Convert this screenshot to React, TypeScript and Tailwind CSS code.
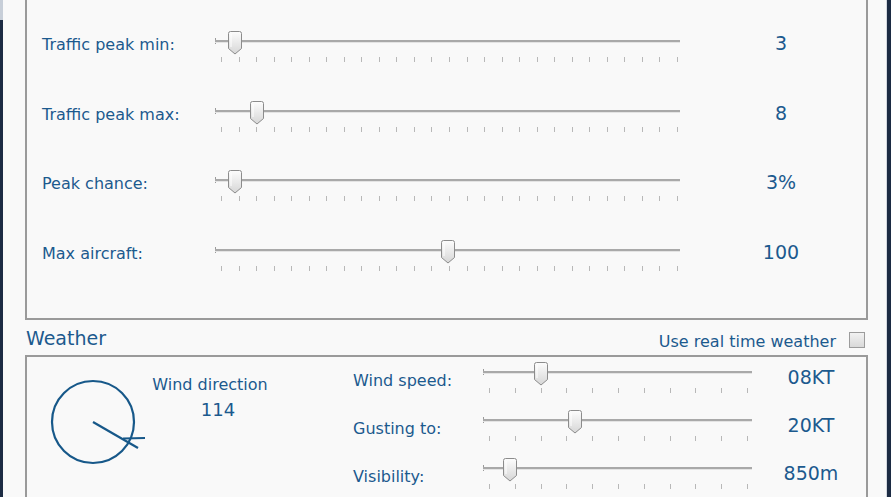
import React from 'react';

const font = { fontFamily: '"DejaVu Sans", "Liberation Sans", sans-serif' };

type SliderProps = { width: number; thumb: number; ticks: number; first: number; last: number };

function Thumb() {
  return (
    <svg width="14" height="24" viewBox="0 0 14 24" className="block">
      <defs>
        <linearGradient id="thumbFill" x1="0" y1="0" x2="0" y2="1">
          <stop offset="0" stopColor="#fdfdfd" />
          <stop offset="1" stopColor="#d6d6d6" />
        </linearGradient>
      </defs>
      <path d="M2.5 0.5 H11.5 Q13.5 0.5 13.5 2.5 V17.5 L7 23 L0.5 17.5 V2.5 Q0.5 0.5 2.5 0.5 Z" fill="url(#thumbFill)" stroke="#8c8c8c" strokeWidth="1" />
      <path d="M3 3 V16" stroke="#ffffff" strokeWidth="1" />
    </svg>
  );
}

function Slider({ width, thumb, ticks, first, last }: SliderProps) {
  const step = (last - first) / (ticks - 1);
  return (
    <div className="relative h-[36px] shrink-0" style={{ width }}>
      {/* end cap + track */}
      <div className="absolute left-0 top-[8px] w-px h-[6px] bg-[#9a9a9a]" />
      <div className="absolute left-0 right-0 top-[10px] h-[2px] bg-[#a9a9a9]" />
      <div className="absolute left-0 right-0 top-[12px] h-px bg-[#e4e4e4]" />
      {Array.from({ length: ticks }).map((_, i) => (
        <div
          key={i}
          className="absolute top-[27px] w-px h-[5px] bg-[#b8b8b8]"
          style={{ left: Math.round(first + i * step) }}
        />
      ))}
      <div className="absolute top-[1px]" style={{ left: thumb - 7 }}>
        <Thumb />
      </div>
    </div>
  );
}

const traffic = [
  { label: 'Traffic peak min:', thumb: 20, value: '3' },
  { label: 'Traffic peak max:', thumb: 42, value: '8' },
  { label: 'Peak chance:', thumb: 20, value: '3%' },
  { label: 'Max aircraft:', thumb: 233, value: '100' },
];

const weather = [
  { label: 'Wind speed:', thumb: 58, value: '08KT' },
  { label: 'Gusting to:', thumb: 92, value: '20KT' },
  { label: 'Visibility:', thumb: 27, value: '850m' },
];

export default function App() {
  return (
    <div className="w-[891px] h-[497px] overflow-hidden flex bg-[#f9f9f9] text-[#1c5a8e]" style={font}>
      {/* left window edge */}
      <div className="w-[3px] shrink-0 flex flex-col">
        <div className="h-[20px] bg-[#c7ced8]" />
        <div className="flex-1 bg-[#1c2b43]" />
      </div>

      <div className="flex-1 min-w-0 flex flex-col pl-[22px] pr-[18px]">
        {/* Traffic panel */}
        <div className="h-[320px] shrink-0 border-x-2 border-b-2 border-[#9a9a9a] pl-[15px] pt-[30px]">
          {traffic.map((row) => (
            <div key={row.label} className="h-[69.5px] flex items-start">
              <div className="w-[173px] shrink-0 mt-[5px] text-[16px] leading-[20px]">{row.label}</div>
              <Slider width={465} thumb={row.thumb} ticks={27} first={6} last={462} />
              <div className="w-[140px] shrink-0 pl-[62px] mt-[1px] text-center text-[19px] leading-[24px]">{row.value}</div>
            </div>
          ))}
        </div>

        {/* Weather header */}
        <div className="h-[35px] shrink-0 flex items-center justify-between pl-px pr-[3px]">
          <span className="text-[19px] leading-[24px]">Weather</span>
          <div className="flex items-center gap-[13px] pt-[5px]">
            <span className="text-[16px] leading-[20px] pt-[3px]">Use real time weather</span>
            <div className="w-[16px] h-[16px] border border-[#9c9c9c] bg-gradient-to-b from-[#f2f2f2] to-[#d9d9d9]" />
          </div>
        </div>

        {/* Weather panel */}
        <div className="flex-1 border-x-2 border-t-2 border-[#9a9a9a] flex items-start overflow-hidden">
          <svg width="100" height="90" viewBox="0 0 100 90" className="ml-[23px] mt-[22px] shrink-0">
            <circle cx="43" cy="43" r="41" fill="none" stroke="#175889" strokeWidth="2.2" />
            <line x1="43" y1="43" x2="88" y2="69" stroke="#175889" strokeWidth="2.2" />
            <line x1="73" y1="59.5" x2="95" y2="59" stroke="#175889" strokeWidth="2.2" />
          </svg>
          <div className="w-[120px] shrink-0 mt-[18px] text-center">
            <div className="text-[16px] leading-[20px]">Wind direction</div>
            <div className="mt-[3px] pl-[16px] text-[18px] leading-[24px]">114</div>
          </div>
          <div className="ml-[83px] pt-[4px] flex flex-col shrink-0">
            {weather.map((row) => (
              <div key={row.label} className="h-[48px] flex items-start">
                <div className="w-[130px] shrink-0 mt-[10px] text-[16px] leading-[20px]">{row.label}</div>
                <Slider width={269} thumb={row.thumb} ticks={11} first={6} last={264} />
                <div className="w-[114px] shrink-0 pl-[4px] mt-[4px] text-center text-[19px] leading-[24px] whitespace-nowrap">{row.value}</div>
              </div>
            ))}
          </div>
        </div>
      </div>

      {/* right window edge */}
      <div className="w-[5px] shrink-0 border-l border-[#d3d8df] bg-[#1c2b43]" />
    </div>
  );
}
